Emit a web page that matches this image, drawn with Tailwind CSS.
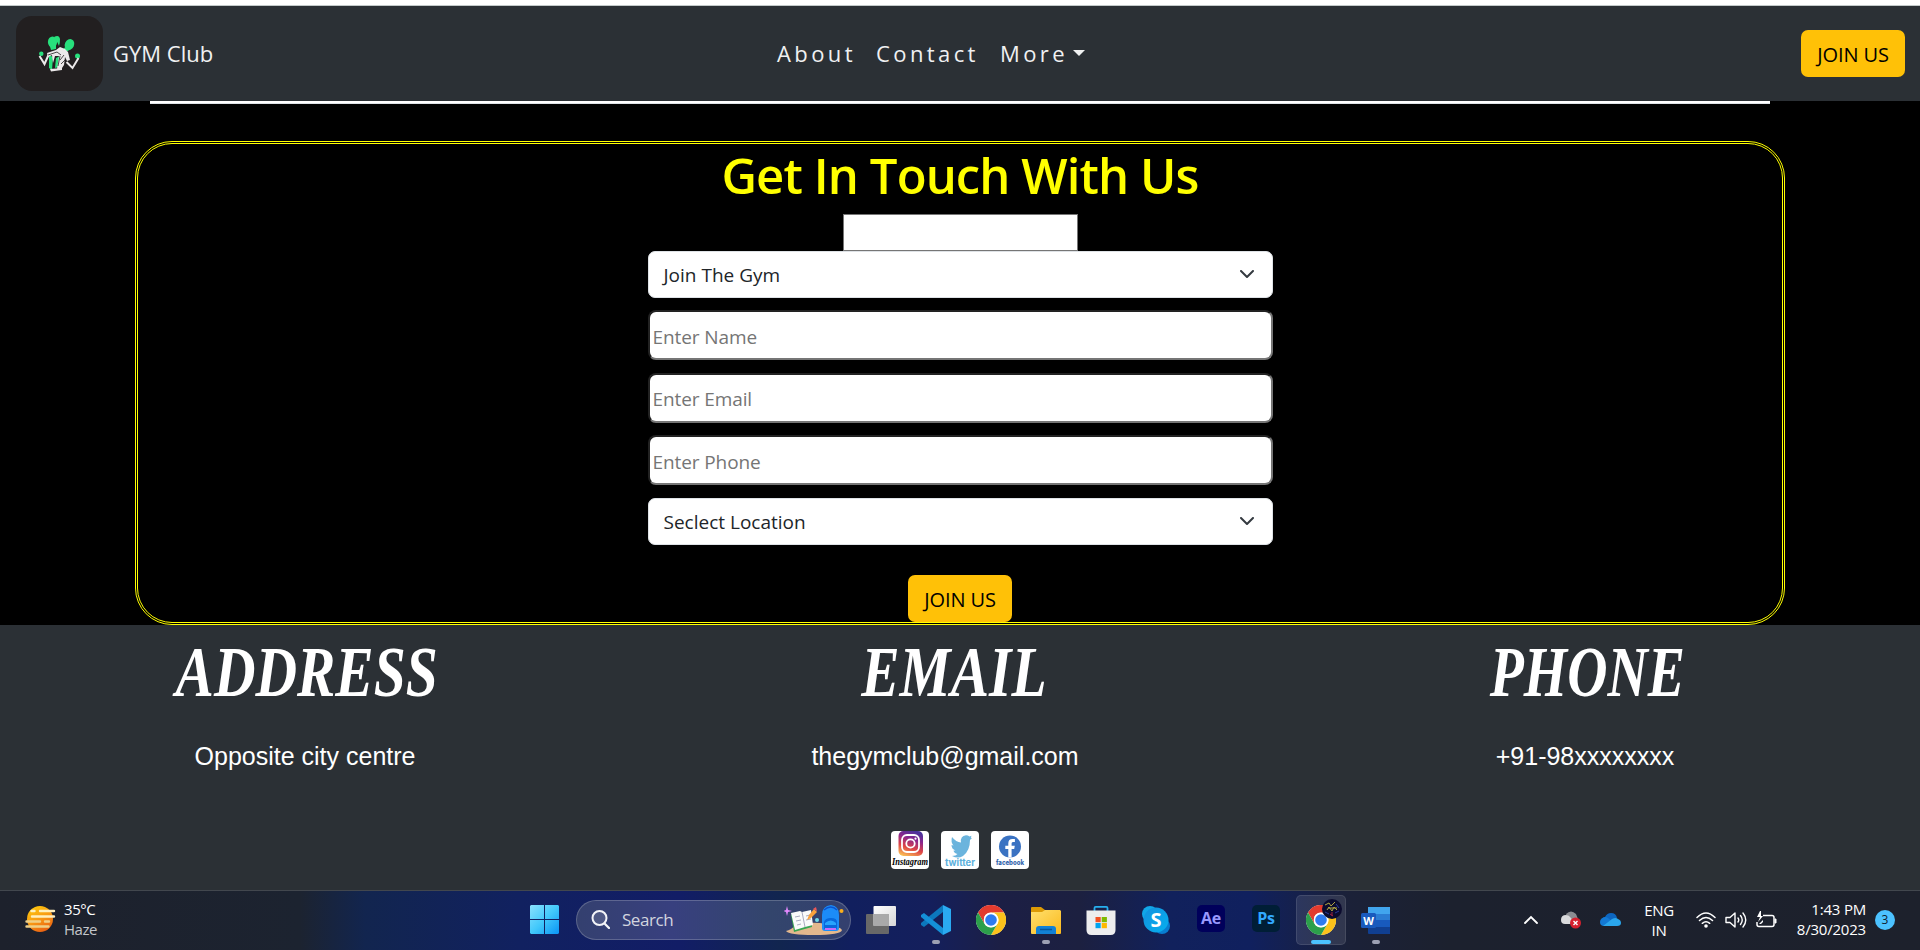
<!DOCTYPE html>
<html lang="en">
<head>
<meta charset="utf-8">
<title>GYM Club</title>
<script src="https://cdn.jsdelivr.net/npm/@tailwindcss/browser@4"></script>
</head>
<body class="h-[950px] w-[1920px] overflow-hidden bg-black font-['Open_Sans','Noto_Sans',sans-serif] flex flex-col">
<svg width="0" height="0" class="hidden">
  <symbol id="chrome" viewBox="0 0 30 30">
    <circle cx="15" cy="15" r="15" fill="#fff"/>
    <path d="M2 7.5A15 15 0 0 1 28 7.5H15A7.5 7.5 0 0 0 8.5 11.3L8.500 18.700Z" fill="#e33b2e"/>
    <path d="M28 7.500A15 15 0 0 1 15 30L21.500 18.750A7.500 7.500 0 0 0 15 7.500Z" fill="#fcc21b"/>
    <path d="M2 7.500A15 15 0 0 0 15 30L21.500 18.750A7.500 7.500 0 0 1 8.500 18.750Z" fill="#2c9f4b"/>
    <circle cx="15" cy="15" r="7.300" fill="#fff"/><circle cx="15" cy="15" r="5.800" fill="#2f7bf0"/>
  </symbol>
</svg>

<header class="flex h-[101px] shrink-0 flex-col bg-[#2b3035] text-[22px] text-[#f0f1f2]">
  <div class="h-[6px] shrink-0 border-b border-[#c3caca] bg-white"></div>
  <div class="flex h-[95px] items-center px-4">
    <div class="flex h-[75px] w-[87px] items-center justify-center rounded-[16px] bg-[#221f20]">
      <svg width="87" height="75" viewBox="16 16 87 75">
        <g fill="#27e07c"><ellipse cx="52.500" cy="42" rx="4.600" ry="5.600"/><path d="M49 43h7v6l-5 1z"/><path d="M54 37q5-3 6 2 0 5-1 7-2-5-4-7z"/><ellipse cx="69.500" cy="44.500" rx="4.600" ry="5.600" transform="rotate(25 69.500 44.500)"/><path d="M63 49l5-4 3 4-5 3z"/><circle cx="41.300" cy="53.700" r="2.200"/><circle cx="77.500" cy="56" r="2.500"/><path d="M49 55l4 2-1 13-3-2zM56 58l4-2-1 11-4 1z"/></g>
        <path d="M39.500 56l5 8 4-9M78.500 58l-6 10-6-6" fill="none" stroke="#ece9ea" stroke-width="2"/>
        <path d="M47 53l9-3 4-3 5 2 3 3 2 8-3 1-2-4-1 8-2 3-5 1 2-13-4 0-2 7-1-8-4 2zM50 69l12-1v2l-11 1.500z" fill="#ece9ea"/>
        <path d="M48 55l9-3 4 3M60 56l-2 10M64 55l-4 5M65 60l-4 4" fill="none" stroke="#221f20" stroke-width=".8"/>
      </svg>
    </div>
    <div class="ml-[10px] w-[662px] tracking-[0px]">GYM Club</div>
    <nav class="flex flex-1 items-center tracking-[3.4px]">
      <a class="ml-[2px] w-[99px]">About</a><a class="w-[124px]">Contact</a><a class="flex items-center">More<svg class="ml-[5px] mb-[2px]" width="12" height="6"><path d="M0 0h12L6 6z" fill="#f0f1f2"/></svg></a>
    </nav>
    <button class="mr-[-1px] h-[47px] w-[104px] rounded-[7px] bg-[#ffc107] pt-[2px] text-[20px] tracking-[-0.1px] text-black">JOIN US</button>
  </div>
</header>

<main class="flex h-[524px] shrink-0 flex-col items-center bg-black">
  <div class="h-[3px] w-[1620px] border-b border-[#dee2e6] bg-white"></div>
  <section class="mt-[37px] h-[484px] w-[1650px] rounded-[37px] border border-[#ffff00] p-px">
   <div class="flex h-full flex-col items-center rounded-[35px] border border-[#ffff00]">
    <h1 class="h-[70px] whitespace-nowrap text-[49px] font-semibold leading-[63px] tracking-[-0.9px] text-[#ffff00]">Get In Touch With Us</h1>
    <div class="h-[37px] w-[235px] shrink-0 border border-[#767676] bg-white"></div>
    <div class="flex h-[47px] w-[625px] shrink-0 items-center justify-between rounded-[7px] border border-[#dee2e6] bg-white pl-[15px] pr-[18px] text-[19px] text-[#212529]">
      <span class="pt-[2px]">Join The Gym</span>
      <svg width="14" height="9" viewBox="0 0 14 9"><path d="M1 1l6 6 6-6" fill="none" stroke="#343a40" stroke-width="2" stroke-linecap="round" stroke-linejoin="round"/></svg>
    </div>
    <input class="mt-[12px] h-[50px] w-[625px] shrink-0 rounded-[8px] border-2 border-t-[#222] border-l-[#222] border-r-[#767676] border-b-[#767676] bg-white pl-[3px] pt-[4px] text-[19px] tracking-[-0.1px] placeholder:text-[#757575]" placeholder="Enter Name">
    <input class="mt-[13px] h-[50px] w-[625px] shrink-0 rounded-[8px] border-2 border-t-[#222] border-l-[#222] border-r-[#767676] border-b-[#767676] bg-white pl-[3px] pt-[2px] text-[19px] tracking-[-0.1px] placeholder:text-[#757575]" placeholder="Enter Email">
    <input class="mt-[12px] h-[50px] w-[625px] shrink-0 rounded-[8px] border-2 border-t-[#222] border-l-[#222] border-r-[#767676] border-b-[#767676] bg-white pl-[3px] pt-[4px] text-[19px] tracking-[-0.1px] placeholder:text-[#757575]" placeholder="Enter Phone">
    <div class="mt-[13px] flex h-[47px] w-[625px] shrink-0 items-center justify-between rounded-[7px] border border-[#dee2e6] bg-white pl-[15px] pr-[18px] text-[19px] text-[#212529]">
      <span class="pt-[2px]">Seclect Location</span>
      <svg width="14" height="9" viewBox="0 0 14 9"><path d="M1 1l6 6 6-6" fill="none" stroke="#343a40" stroke-width="2" stroke-linecap="round" stroke-linejoin="round"/></svg>
    </div>
    <button class="mt-[30px] h-[47px] w-[104px] shrink-0 rounded-[7px] bg-[#ffc107] pt-[2px] text-[20px] tracking-[-0.1px] text-black">JOIN US</button>
   </div>
  </section>
</main>

<footer class="flex h-[265px] shrink-0 flex-col bg-[#2b3035] text-white">
  <div class="ml-[-15px] grid h-[206px] w-[1920px] grid-cols-3 text-center font-['Liberation_Sans',sans-serif] text-[25px]">
    <div><h2 class="h-[112px] scale-x-[.81] pt-[7px] pl-[4px] font-['Liberation_Serif',serif] text-[71px] font-bold italic leading-[80px]">ADDRESS</h2><p class="leading-[38px]">Opposite city centre</p></div>
    <div><h2 class="h-[112px] scale-x-[.81] pt-[7px] pl-[22px] font-['Liberation_Serif',serif] text-[71px] font-bold italic leading-[80px]">EMAIL</h2><p class="leading-[38px]">thegymclub@gmail.com</p></div>
    <div><h2 class="h-[112px] scale-x-[.785] pt-[7px] pl-[6px] font-['Liberation_Serif',serif] text-[71px] font-bold italic leading-[80px]">PHONE</h2><p class="leading-[38px]">+91-98xxxxxxxx</p></div>
  </div>
  <div class="flex justify-center gap-3">
    <svg class="rounded-[4px] bg-white" width="38" height="38" viewBox="0 0 38 38">
      <defs><linearGradient id="ig" x1=".25" y1="1" x2=".6" y2="0"><stop offset="0" stop-color="#f9bd55"/><stop offset=".35" stop-color="#df4545"/><stop offset=".7" stop-color="#8b258c"/><stop offset="1" stop-color="#4a329b"/></linearGradient></defs>
      <rect x="7.500" y="0" width="24.500" height="25" rx="5" fill="url(#ig)"/><rect x="11" y="4" width="17" height="17" rx="5" fill="none" stroke="#fff" stroke-width="1.800"/><circle cx="19.500" cy="12.500" r="4.200" fill="none" stroke="#fff" stroke-width="1.800"/><circle cx="24.500" cy="7.700" r="1.100" fill="#fff"/>
      <text x="1" y="34" textLength="36" lengthAdjust="spacingAndGlyphs" font-family="Liberation Serif" font-style="italic" font-weight="bold" font-size="10.500">Instagram</text>
    </svg>
    <svg class="rounded-[4px] bg-white" width="38" height="38" viewBox="0 0 38 38">
      <path d="M11 6q4 5 9 5.500Q19 5 25 4.300q2 0 3.500 1.200l2-.8-.7 2 1.200.2-2 2.200Q29 20 22 25q-5 3-11 0 4 0 5.500-2-3.500-1-4-3.500h2q-4-1.500-4-5.500l2 .5Q9.500 11 11 6z" fill="#6bb4dd"/>
      <text x="4" y="35.300" textLength="30" lengthAdjust="spacingAndGlyphs" font-family="Inter" font-weight="700" font-size="9.500" fill="#5cb0dc">twitter</text>
    </svg>
    <svg class="rounded-[4px] bg-white" width="38" height="38" viewBox="0 0 38 38">
      <circle cx="19" cy="15.500" r="11" fill="#3a72c2"/><path d="M17.300 26.500v-8.500h-3v-3.300h3v-2.400q0-4.300 4.200-4.300h2.400v3.100h-2q-1.300 0-1.300 1.500v2.100h3.200l-.6 3.300h-2.600v8.500z" fill="#fff"/>
      <text x="5" y="33.500" textLength="28" lengthAdjust="spacingAndGlyphs" font-family="Inter" font-weight="800" font-size="7" fill="#3465ad">facebook</text>
    </svg>
  </div>
</footer>

<div class="flex h-[60px] shrink-0 items-center border-t border-[#42474e] bg-[linear-gradient(90deg,#1d212c_0px,#1c2330_300px,#12254f_365px,#112160_520px,#121d66_680px,#11254f_780px,#111f5e_850px,#141f5c_930px,#1c1f45_1000px,#1c2040_1080px,#11215c_1170px,#10205e_1250px,#1b2138_1350px,#1c212e_1450px,#1d212c_1920px)] pb-[2px] text-[15px] leading-[20px] text-white">
  <svg class="ml-[24px] mb-[2px]" width="32" height="28" viewBox="0 0 32 28">
    <defs><linearGradient id="sun" x1=".2" y1="0" x2=".7" y2="1"><stop stop-color="#fdc90b"/><stop offset=".5" stop-color="#f89a13"/><stop offset="1" stop-color="#e85d13"/></linearGradient></defs>
    <circle cx="16" cy="14" r="13" fill="url(#sun)"/><g stroke="#fff0bd" stroke-width="2.400" stroke-linecap="round"><path d="M7.500 6h3M16 6h14M8 11.500h22"/><path d="M2.500 16.500h13.500M21 16.500h4M2.500 21.500h22" stroke="#efcf86"/></g>
  </svg>
  <div class="ml-[8px] mb-[2px] w-[466px] tracking-[-0.45px]"><div>35°C</div><div class="text-[#c3c6cb]">Haze</div></div>
  <svg width="29" height="29" viewBox="0 0 29 29"><defs><linearGradient id="win" x1="0" y1="0" x2="1" y2="1"><stop stop-color="#8be1fd"/><stop offset=".5" stop-color="#43c9fb"/><stop offset="1" stop-color="#0a94f5"/></linearGradient></defs><path d="M1 0h13v14H0V1zM15 0h13l1 1v13H15zM0 15h14v14H1l-1-1zM15 15h14v13l-1 1H15z" fill="url(#win)"/></svg>
  <div class="ml-[17px] flex h-[40px] w-[275px] items-center rounded-full border border-white/20 bg-[linear-gradient(90deg,#34406f,#38407f_35%,#33456c_70%,#34406f)] pl-[14px] pr-[6px] text-[17px] text-[#d2d5df]">
    <svg width="19" height="19" viewBox="0 0 19 19"><circle cx="8.500" cy="8" r="7" fill="#ffffff22" stroke="#f3f4f8" stroke-width="2"/><path d="M13.500 13.500l4.500 4.500" stroke="#f3f4f8" stroke-width="2.300" stroke-linecap="round"/></svg>
    <span class="ml-[12px] flex-1 pt-[1px] tracking-[-0.45px]">Search</span>
    <svg width="60" height="32" viewBox="784 906 60 32">
      <path d="M786 933q5-1 10-6 14-4 31-1 14 3 15 6-1 5-28 5-25 0-28-4z" fill="#e3b88d"/>
      <path d="M791 917l15-3 6 3v12l-18 5z" fill="#39a552"/><path d="M791 915l9-2 2 1 9-2 2 15-8 2-10 3z" fill="#fafafa"/><path d="M802 914l3 15M795 919l5-1M796 923l5-1M806 918l4-1M806 922l5-1M797 927l4-1" stroke="#a9abc0" stroke-width="1"/>
      <path d="M807 922l2-5 5-6 3 3-6 6z" fill="#f9a13c"/><path d="M813 911l3-2 1 4z" fill="#ef5659"/>
      <path d="M787 908l1 4 4 1-4 1-1 4-1-4-3-1 3-1z" fill="#e489ff"/><circle cx="817" cy="922" r="2" fill="#6fdbe9"/><circle cx="841.500" cy="913" r="2" fill="#faae1c"/>
      <path d="M822 917q0-9 9-10 8 1 8 10v13q0 3-3 3h-11q-3 0-3-3z" fill="#1c8cf8"/><path d="M824 912q7-6 13 0" fill="none" stroke="#0b52cd" stroke-width="1.500"/><path d="M824 931v-7q1-4 7-4t6 4v7z" fill="#0868dc"/><path d="M825 925q6-5 11 0v2h-11z" fill="#27a4fc"/><path d="M825 931h11" stroke="#c46bf8" stroke-width="2"/>
    </svg>
  </div>

  <div class="ml-[5px] flex items-center gap-[5px]">
    <div class="flex h-[50px] w-[50px] items-center justify-center"><svg width="30" height="30" viewBox="0 0 30 30"><defs><linearGradient id="tv" x2="1" y2="1"><stop stop-color="#fff"/><stop offset="1" stop-color="#d6d6d6"/></linearGradient></defs><rect x="0" y="9" width="23" height="20" rx="1" fill="#686868"/><rect x="7.500" y="1" width="22.500" height="20" rx="1" fill="url(#tv)"/><path d="M7.500 9H23v12H7.500z" fill="#a9a9a9"/></svg></div>
    <div class="relative flex h-[50px] w-[50px] items-center justify-center"><svg width="30" height="30" viewBox="0 0 30 30"><path d="M22 7L3 22l-3-2v-2L22 0z" fill="#0c78bd"/><path d="M22 23L3 8l-3 2v2l22 18z" fill="#1490d8"/><path d="M22 0l8 4v22l-8 4z" fill="#2aaaf2"/></svg><i class="absolute bottom-[1px] h-[4px] w-[8px] rounded-full bg-[#9da1b3]"></i></div>
    <div class="flex h-[50px] w-[50px] items-center justify-center"><svg width="30" height="30"><use href="#chrome"/></svg></div>
    <div class="relative flex h-[50px] w-[50px] items-center justify-center"><svg width="30" height="30" viewBox="0 0 30 30"><defs><linearGradient id="fo" x2="1" y2="1"><stop stop-color="#ffe06e"/><stop offset="1" stop-color="#fbb91c"/></linearGradient></defs><path d="M0 3q0-1 1-1h9l4 3h4v8H0z" fill="#dc9a05"/><path d="M0 7h11l3-2h15l1 1v22q0 1-1 1H1q-1 0-1-1z" fill="url(#fo)"/><path d="M5 29v-5q0-3 3-3h14q3 0 3 3v5z" fill="#1281d5"/><path d="M9 24.500h12" stroke="#07579c" stroke-width="1.500"/></svg><i class="absolute bottom-[1px] h-[4px] w-[8px] rounded-full bg-[#9da1b3]"></i></div>
    <div class="flex h-[50px] w-[50px] items-center justify-center"><svg width="30" height="30" viewBox="0 0 30 30"><path d="M8.500 7V3q0-1.200 1.200-1.200h10.600q1.200 0 1.200 1.200v4" fill="none" stroke="#27b0ef" stroke-width="1.800"/><path d="M.5 5.500h29V25q0 5-5 5h-19q-5 0-5-5z" fill="#ededee"/><path d="M9.500 12h5.200v5.200H9.500z" fill="#f25022"/><path d="M15.700 12h5.200v5.200h-5.200z" fill="#7fba00"/><path d="M9.500 18h5.200v5.200H9.500z" fill="#00a4ef"/><path d="M15.700 18h5.200v5.200h-5.200z" fill="#ffb900"/></svg></div>
    <div class="flex h-[50px] w-[50px] items-center justify-center"><svg width="30" height="30" viewBox="0 0 30 30"><defs><linearGradient id="sk" y2="1"><stop stop-color="#1391df"/><stop offset="1" stop-color="#05afee"/></linearGradient></defs><circle cx="9" cy="9" r="8" fill="#11a7e9"/><circle cx="21" cy="21" r="8" fill="#087dd0"/><circle cx="15" cy="15" r="12.500" fill="url(#sk)"/><text x="15" y="22" text-anchor="middle" font-family="Open Sans" font-weight="700" font-size="20" fill="#fff">S</text></svg></div>
    <div class="flex h-[50px] w-[50px] items-center justify-center"><span class="mb-[2px] flex h-[27px] w-[28px] items-center justify-center rounded-[5px] bg-[#00005b] pb-px text-[16px] font-bold tracking-[-0.3px] text-[#9999ff]">Ae</span></div>
    <div class="flex h-[50px] w-[50px] items-center justify-center"><span class="mb-[2px] flex h-[27px] w-[28px] items-center justify-center rounded-[5px] bg-[#001e36] pb-px text-[16px] font-bold tracking-[-0.3px] text-[#31a8ff]">Ps</span></div>
    <div class="relative flex h-[50px] w-[50px] items-center justify-center rounded-[5px] border border-white/10 bg-white/10"><svg width="30" height="30"><use href="#chrome"/></svg>
      <svg class="absolute left-[25px] top-[3px]" width="20" height="20" viewBox="0 0 20 20"><circle cx="10" cy="10" r="10" fill="#0b0b2e"/><g fill="none" stroke-width="1"><path d="M3 6l4-2 2 3 4-4M5 11l2-3 3 4 2-4 3 3M6 9h9" stroke="#b0a443"/><path d="M3 13l4 2M13 14l4-2M14 5l3 4" stroke="#29389a"/><path d="M8 15l3 2M10 13v4" stroke="#a3243f"/></g></svg>
      <i class="absolute bottom-0 h-[4px] w-[20px] rounded-full bg-[#4cc2ff]"></i></div>
    <div class="relative flex h-[50px] w-[50px] items-center justify-center"><svg width="30" height="28" viewBox="0 0 30 28"><path d="M7 1h22v7H7z" fill="#41a5ee"/><path d="M7 8h22v6H7z" fill="#2b7cd3"/><path d="M7 14h22v7H7z" fill="#185abd"/><path d="M7 21h22v7H8q-1 0-1-1z" fill="#103f91"/><rect x="0" y="7" width="15" height="15" rx="1.500" fill="#195abd"/><text x="7.500" y="18.500" text-anchor="middle" font-family="Open Sans" font-weight="700" font-size="11" fill="#fff">W</text></svg><i class="absolute bottom-[1px] h-[4px] w-[8px] rounded-full bg-[#9da1b3]"></i></div>
  </div>

  <svg class="ml-[123px]" width="14" height="9" viewBox="0 0 14 9"><path d="M1 8l6-6 6 6" fill="none" stroke="#fff" stroke-width="1.800" stroke-linecap="round"/></svg>
  <svg class="ml-[22px]" width="22" height="18" viewBox="0 0 22 18"><path d="M6 3q5-5 10 0l2 5-10 1z" fill="#8b8d92"/><path d="M1 9q0-5 5-5 3 0 5 3l4 6H5q-4 0-4-4z" fill="#d9dadc"/><circle cx="15.500" cy="12" r="5.500" fill="#d6212e"/><path d="M13.500 10l4 4M17.500 10l-4 4" stroke="#fff" stroke-width="1.400"/></svg>
  <svg class="ml-[18px]" width="21" height="14" viewBox="0 0 21 14"><path d="M2 6q1-2 3-2 2-4 6-4 5 0 6 5l-6 4-7 3z" fill="#0d66c0"/><path d="M0 9q0-4 5-5 3 0 6 4l-6 5H4q-4 0-4-4z" fill="#1379d4"/><path d="M3 13l9-7q4-2 6 0 3 1 3 4 0 3-4 3z" fill="#2aa6ec"/></svg>
  <div class="ml-[19px] w-[38px] text-center tracking-[-0.3px]"><div>ENG</div><div>IN</div></div>
  <svg class="ml-[17px]" width="22" height="18" viewBox="0 0 22 18"><g fill="none" stroke="#fff" stroke-width="1.500" stroke-linecap="round"><path d="M2 6.500q9-9 18 0M4.500 9.500q6.500-6 13 0M7.300 12.300q3.700-3 7.400 0"/></g><circle cx="11" cy="15" r="1.800" fill="#fff"/></svg>
  <svg class="ml-[8px]" width="22" height="18" viewBox="0 0 22 18"><g fill="none" stroke="#fff" stroke-width="1.400" stroke-linecap="round" stroke-linejoin="round"><path d="M1 6.500h4l5-4.500v14l-5-4.500H1zM13 7q1.500 2 0 4M15.500 4.500q3.500 4.500 0 9M18 2q5.500 7 0 14"/></g></svg>
  <svg class="ml-[8px]" width="22" height="18" viewBox="0 0 22 18"><path d="M8 4.500h9q2 0 2 2v7q0 2-2 2H4q-2 0-2-2V11" fill="none" stroke="#fff" stroke-width="1.500"/><path d="M20 8h1v4h-1z" stroke="#fff" fill="#fff"/><path d="M5 0L2 6h3l-2 5 5-6H6V0z" fill="#fff"/><path d="M4 13l4-4v2l-2 2z" fill="#fff"/></svg>
  <div class="mb-[2px] ml-[9px] w-[80px] text-right tracking-[-0.2px]"><div>1:43 PM</div><div>8/30/2023</div></div>
  <div class="ml-[9px] flex h-[20px] w-[20px] items-center justify-center rounded-full bg-[#4cc2ff] text-[12px] text-[#10202e]">3</div>
</div>
</body>
</html>
